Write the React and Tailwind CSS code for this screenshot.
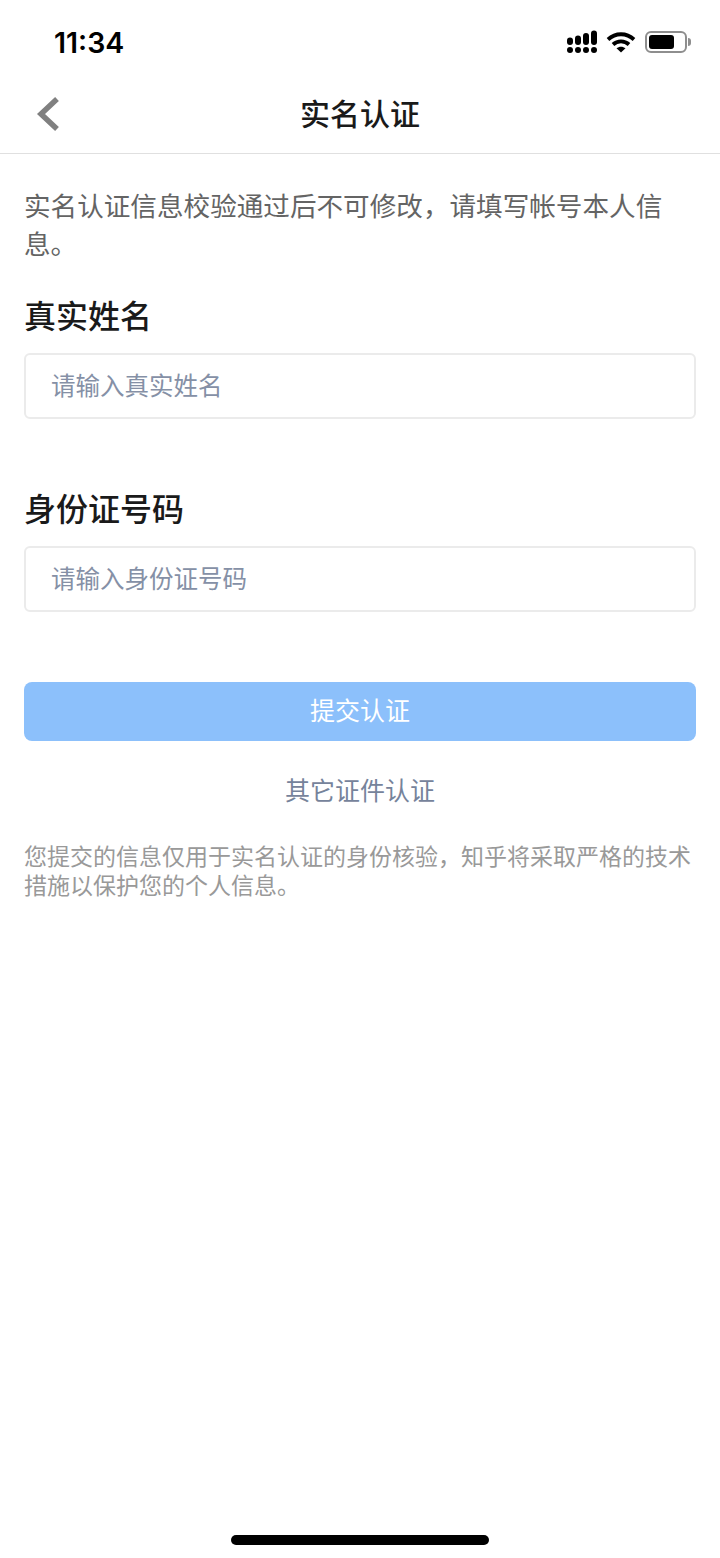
import React from "react";

const cjk = "font-['Liberation_Sans','Noto_Sans_CJK_SC',sans-serif]";

function Signal() {
  return (
    <svg width="30" height="24" viewBox="0 0 30 24" fill="#000">
      <rect x="0" y="7.500" width="6" height="7.500" rx="3" />
      <rect x="8" y="5.500" width="6" height="9.500" rx="3" />
      <rect x="16" y="3" width="6" height="12" rx="3" />
      <rect x="24" y="0.500" width="6" height="14.500" rx="3" />
      <circle cx="3" cy="20" r="3" />
      <circle cx="11" cy="20" r="3" />
      <circle cx="19" cy="20" r="3" />
      <circle cx="27" cy="20" r="3" />
    </svg>
  );
}

function Wifi() {
  return (
    <svg width="30" height="24" viewBox="0 0 30 24" fill="none" stroke="#000" strokeWidth="3.800">
      <path d="M2 9.500C9.500 2.500 20.500 2.500 28 9.500" />
      <path d="M7 14.500C11.500 10.300 18.500 10.300 23 14.500" />
      <path d="M15 22.500L10.500 18.300C13 16.200 17 16.200 19.500 18.300Z" fill="#000" stroke="none" />
    </svg>
  );
}

function Battery() {
  return (
    <div className="flex items-center">
      <div className="w-[42px] h-[22px] rounded-[6px] border-2 border-[#8e8e8e] p-[2px]">
        <div className="w-[25px] h-full rounded-[3px] bg-black" />
      </div>
      <div className="ml-[1px] w-[3px] h-[8px] rounded-r bg-[#8e8e8e]" />
    </div>
  );
}

function Field({ label, placeholder }) {
  return (
    <div>
      <div className="text-[32px] leading-[40px] font-medium text-[#1a1a1a]">{label}</div>
      <div className="mt-[16px] h-[66px] rounded-[6px] border-2 border-[#ebebeb] pl-[25px] pt-[2px] flex items-center text-[24.500px] text-[#8590a6]">
        {placeholder}
      </div>
    </div>
  );
}

export default function App() {
  return (
    <div className={`relative h-[1558px] w-[720px] bg-white overflow-hidden ${cjk}`}>
      {/* status bar */}
      <div className="h-[76px] pl-[54px] pr-[29px] pt-[11px] flex items-center justify-between">
        <span className="font-['Inter',sans-serif] text-[28.500px] font-semibold text-black">11:34</span>
        <div className="flex items-center gap-[9px] -mt-[3px]">
          <Signal />
          <Wifi />
          <Battery />
        </div>
      </div>

      {/* nav */}
      <div className="relative h-[78px] border-b border-[#e0e0e0] flex items-center justify-center">
        <svg className="absolute left-[36px] top-[20px]" width="24" height="36" viewBox="0 0 24 36" fill="none" stroke="#808080" strokeWidth="5.500">
          <path d="M21 3L5 18L21 33" />
        </svg>
        <span className="text-[30px] font-medium text-[#1a1a1a]">实名认证</span>
      </div>

      {/* form */}
      <div className="px-[24px]">
        <p className="mt-[34px] text-[26.600px] leading-[38px] text-[#646464]">
          实名认证信息校验通过后不可修改，请填写帐号本人信息。
        </p>
        <div className="mt-[33px] flex flex-col gap-[71px]">
          <Field label="真实姓名" placeholder="请输入真实姓名" />
          <Field label="身份证号码" placeholder="请输入身份证号码" />
        </div>
        <button className="mt-[70px] w-full h-[59px] rounded-[8px] pt-[1px] bg-[#8cc0fb] text-white text-[25px]">
          提交认证
        </button>
        <div className="mt-[30px] text-center text-[25px] leading-[40px] text-[#76839b]">其它证件认证</div>
        <p className="mt-[32px] text-[23px] leading-[29px] text-[#999999]">
          您提交的信息仅用于实名认证的身份核验，知乎将采取严格的技术措施以保护您的个人信息。
        </p>
      </div>

      {/* home indicator */}
      <div className="absolute left-[231px] bottom-[13px] w-[258px] h-[10px] rounded-full bg-black" />
    </div>
  );
}
